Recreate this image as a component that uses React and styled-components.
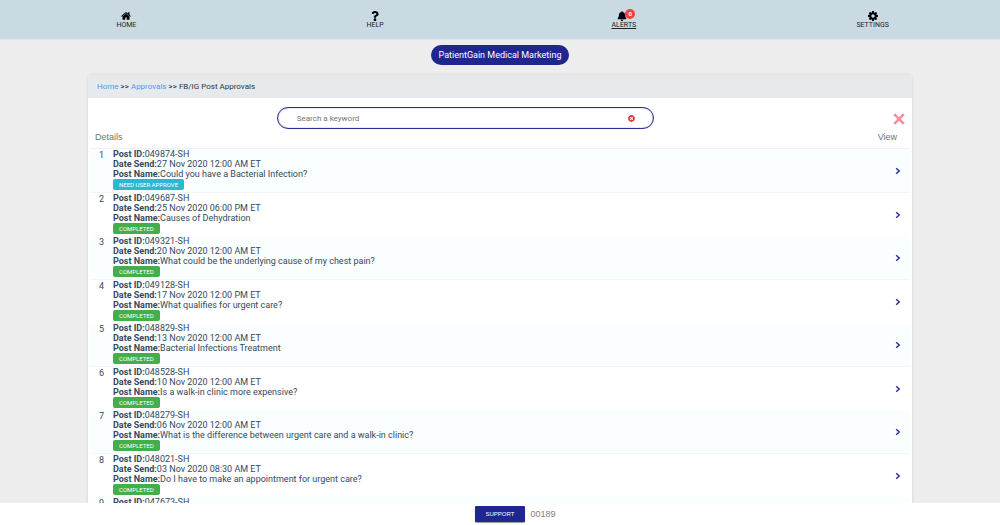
import React, { useState } from "react";
import styled, { createGlobalStyle } from "styled-components";
import { FaQuestion, FaBell, FaTimesCircle } from "react-icons/fa";

const GlobalStyle = createGlobalStyle`
  * {
    box-sizing: border-box;
  }

  body {
    margin: 0;
    background: #ededed;
    font-family: Roboto, "Liberation Sans", Arial, sans-serif;
    color: #34495e;
  }
`;

const Shell = styled.div`
  display: flex;
  flex-direction: column;
  height: 100vh;
`;

const NavBar = styled.nav`
  display: grid;
  grid-template-columns: repeat(4, 1fr);
  flex: none;
  height: 40px;
  padding: 11px 3px 0 2px;
  background: #c9dae2;
  border-bottom: 1px solid #dce6eb;
`;

const NavLink = styled.a`
  position: relative;
  justify-self: center;
  display: flex;
  flex-direction: column;
  align-items: center;
  height: 19px;
  font-size: 7px;
  line-height: 9px;
  color: #222;
  text-decoration: ${(props) => (props.$active ? "underline" : "none")};
`;

const NavIcon = styled.span`
  display: flex;
  height: 10px;
  padding-right: ${(props) => (props.$badged ? "4px" : "0")};
  color: #000;

  svg {
    width: 10px;
    height: 10px;
  }
`;

const Count = styled.span`
  position: absolute;
  top: -2px;
  right: 1px;
  width: 10px;
  height: 10px;
  border-radius: 50%;
  background: #f44336;
  color: #fff;
  font-size: 6px;
  font-weight: bold;
  line-height: 10px;
  text-align: center;
`;

const Main = styled.main`
  flex: 1;
  min-height: 0;
  padding: 5px 88px 0;
  overflow-y: auto;
  scrollbar-width: none;
`;

const ClientButton = styled.button`
  display: block;
  height: 20px;
  margin: 0 auto 10px;
  padding: 0 8px;
  border: none;
  border-radius: 10px;
  background: #1f268f;
  color: #fff;
  font-family: inherit;
  font-size: 9px;
`;

const Panel = styled.section`
  background: #fff;
  border-radius: 3px;
  box-shadow: 0 0 3px rgba(0, 0, 0, 0.12);
`;

const Breadcrumb = styled.div`
  display: flex;
  align-items: center;
  gap: 2px;
  height: 23px;
  padding: 0 9px;
  border-radius: 3px 3px 0 0;
  background: #e6eaed;
  color: #333;
  font-size: 8px;

  a {
    color: #4a9bea;
    text-decoration: none;
  }

  span {
    color: #111;
  }
`;

const SearchRow = styled.form`
  display: grid;
  grid-template-columns: 1fr 2fr 1fr 69px;
  align-items: center;
  padding-top: 9px;
`;

const SearchBox = styled.div`
  grid-column: 2;
  display: flex;
  align-items: center;
  height: 22px;
  padding: 0 18px;
  border: 1px solid #2b3192;
  border-radius: 11px;
  box-shadow: inset 0 0 1px #2b3192;
`;

const SearchInput = styled.input`
  flex: 1;
  min-width: 0;
  padding: 0 1px;
  border: none;
  outline: none;
  background: transparent;
  color: #333;
  font-family: inherit;
  font-size: 8px;

  &::placeholder {
    color: #757575;
  }
`;

const IconButton = styled.button`
  display: flex;
  padding: 0;
  border: none;
  background: none;
  color: ${(props) => props.$color};
`;

const CloseCell = styled.div`
  grid-column: 4;
  justify-self: end;
  padding: 2px 7px 0 0;
`;

const PostTable = styled.table`
  width: calc(100% - 4px);
  margin: 0 2px;
  border-collapse: separate;
  border-spacing: 0;
`;

const HeadCell = styled.th`
  height: 20px;
  padding: 0 13px 3px 5px;
  border-bottom: 1px solid #eef1f2;
  color: #6c7a6c;
  font-family: "Liberation Sans", Arial, sans-serif;
  font-size: 9px;
  font-weight: normal;
  text-align: ${(props) => props.$align || "left"};
`;

const Row = styled.tr`
  td {
    height: 43px;
    padding: 0;
    vertical-align: top;
  }

  &:nth-child(odd) td {
    height: 44px;
    background: #fafeff;
    border-bottom: 1px solid #f2f6f7;
  }
`;

const NumberCell = styled.td`
  width: 23px;
  font-size: 9px;
  line-height: 12px;
  text-align: center;
`;

const Line = styled.div`
  font-size: 9px;
  line-height: 10px;
`;

const Status = styled.span`
  display: block;
  width: fit-content;
  height: 11px;
  padding: 0 6px;
  border-radius: 2px;
  background: ${(props) => (props.$pending ? "#29b9d3" : "#44ad4c")};
  color: #fff;
  font-size: 6px;
  line-height: 11px;
`;

const ViewCell = styled.td`
  && {
    vertical-align: middle;
  }

  button {
    margin: 0 9px 0 auto;
  }
`;

const Footer = styled.footer`
  display: flex;
  flex: none;
  align-items: center;
  justify-content: center;
  gap: 5px;
  height: 22px;
  padding-left: 30px;
  background: #fff;
  color: #808080;
  font-family: "Liberation Sans", Arial, sans-serif;
  font-size: 9px;
`;

const SupportButton = styled.button`
  height: 16px;
  padding: 0 11px;
  border: none;
  border-radius: 1px;
  background: #1f268f;
  box-shadow: 0 1px 1px rgba(0, 0, 0, 0.4);
  color: #fff;
  font-family: inherit;
  font-size: 6px;
`;

const HomeIcon = () => (
  <svg viewBox="64 192 1664 1408" fill="currentColor">
    <path d="M1472 992v480q0 26-19 45t-45 19h-384v-384h-256v384h-384q-26 0-45-19t-19-45v-480q0-1 .5-3t.5-3l575-474 575 474q1 2 1 6zm223-69l-62 74q-8 9-21 11h-3q-13 0-21-7l-692-577-692 577q-12 8-24 7-13-2-21-11l-62-74q-8-10-7-23.5t11-21.5l719-599q32-26 76-26t76 26l244 204v-195q0-14 9-23t23-9h192q14 0 23 9t9 23v408l219 182q10 8 11 21.5t-7 23.5z" />
  </svg>
);

const GearIcon = () => (
  <svg viewBox="128 128 1536 1536" fill="currentColor">
    <path d="M1152 896q0-106-75-181t-181-75-181 75-75 181 75 181 181 75 181-75 75-181zm512-109v222q0 12-8 23t-20 13l-185 28q-19 54-39 91 35 50 107 138 10 12 10 25t-9 23q-27 37-99 108t-94 71q-12 0-26-9l-138-108q-44 23-91 38-16 136-29 186-7 28-36 28h-222q-14 0-24.5-8.5t-11.5-21.5l-28-184q-49-16-90-37l-141 107q-10 9-25 9-14 0-25-11-126-114-165-168-7-10-7-23 0-12 8-23 15-21 51-66.5t54-70.5q-27-50-41-99l-183-27q-13-2-21-12.5t-8-23.5v-222q0-12 8-23t19-13l186-28q14-46 39-92-40-57-107-138-10-12-10-24 0-10 9-23 26-36 98.5-107.5t94.5-71.5q13 0 26 10l138 107q44-23 91-38 16-136 29-186 7-28 36-28h222q14 0 24.5 8.5t11.5 21.5l28 184q49 16 90 37l142-107q9-9 24-9 13 0 25 10 129 119 165 170 7 8 7 22 0 12-8 23-15 21-51 66.5t-54 70.5q26 50 41 98l183 28q13 2 21 12.5t8 23.5z" />
  </svg>
);

const posts = [
  { id: "049874-SH", date: "27 Nov 2020 12:00 AM ET", name: "Could you have a Bacterial Infection?", pending: true },
  { id: "049687-SH", date: "25 Nov 2020 06:00 PM ET", name: "Causes of Dehydration" },
  { id: "049321-SH", date: "20 Nov 2020 12:00 AM ET", name: "What could be the underlying cause of my chest pain?" },
  { id: "049128-SH", date: "17 Nov 2020 12:00 PM ET", name: "What qualifies for urgent care?" },
  { id: "048829-SH", date: "13 Nov 2020 12:00 AM ET", name: "Bacterial Infections Treatment" },
  { id: "048528-SH", date: "10 Nov 2020 12:00 AM ET", name: "Is a walk-in clinic more expensive?" },
  { id: "048279-SH", date: "06 Nov 2020 12:00 AM ET", name: "What is the difference between urgent care and a walk-in clinic?" },
  { id: "048021-SH", date: "03 Nov 2020 08:30 AM ET", name: "Do I have to make an appointment for urgent care?" },
  { id: "047673-SH" },
];

const PostRow = ({ post, number }) => (
  <Row>
    <NumberCell>{number}</NumberCell>
    <td>
      <Line>
        <b>Post ID:</b>
        {post.id}
      </Line>
      {post.name && (
        <>
          <Line>
            <b>Date Send:</b>
            {post.date}
          </Line>
          <Line>
            <b>Post Name:</b>
            {post.name}
          </Line>
          <Status $pending={post.pending}>{post.pending ? "NEED USER APPROVE" : "COMPLETED"}</Status>
        </>
      )}
    </td>
    <ViewCell>
      <IconButton type="button" $color="#2b3192" aria-label={`View post ${post.id}`}>
        <svg width="6" height="8" viewBox="0 0 6 8" fill="none" stroke="currentColor" strokeWidth="1.5">
          <path d="M1.2 1.2 4.2 4 1.2 6.8" />
        </svg>
      </IconButton>
    </ViewCell>
  </Row>
);

const App = () => {
  const [keyword, setKeyword] = useState("");

  return (
    <Shell>
      <GlobalStyle />
      <NavBar>
        <NavLink href="#home">
          <NavIcon>
            <HomeIcon />
          </NavIcon>
          HOME
        </NavLink>
        <NavLink href="#help">
          <NavIcon>
            <FaQuestion />
          </NavIcon>
          HELP
        </NavLink>
        <NavLink href="#alerts" $active>
          <NavIcon $badged>
            <FaBell />
          </NavIcon>
          ALERTS
          <Count>0</Count>
        </NavLink>
        <NavLink href="#settings">
          <NavIcon>
            <GearIcon />
          </NavIcon>
          SETTINGS
        </NavLink>
      </NavBar>

      <Main>
        <ClientButton type="button">PatientGain Medical Marketing</ClientButton>
        <Panel>
          <Breadcrumb>
            <a href="#home">Home</a>
            <span>&gt;&gt;</span>
            <a href="#approvals">Approvals</a>
            <span>&gt;&gt;</span>
            FB/IG Post Approvals
          </Breadcrumb>

          <SearchRow onSubmit={(e) => e.preventDefault()}>
            <SearchBox>
              <SearchInput
                aria-label="Search a keyword"
                placeholder="Search a keyword"
                value={keyword}
                onChange={(e) => setKeyword(e.target.value)}
              />
              <IconButton type="button" $color="#e8323c" aria-label="Clear search" onClick={() => setKeyword("")}>
                <FaTimesCircle size={7} />
              </IconButton>
            </SearchBox>
            <CloseCell>
              <IconButton type="button" $color="#f29199" aria-label="Close">
                <svg width="12" height="12" viewBox="0 0 12 12" stroke="currentColor" strokeWidth="2.6">
                  <path d="M1.2 1.2 10.8 10.8M10.8 1.2 1.2 10.8" />
                </svg>
              </IconButton>
            </CloseCell>
          </SearchRow>

          <PostTable>
            <thead>
              <tr>
                <HeadCell colSpan={2}>Details</HeadCell>
                <HeadCell $align="right">View</HeadCell>
              </tr>
            </thead>
            <tbody>
              {posts.map((post, i) => (
                <PostRow key={post.id} post={post} number={i + 1} />
              ))}
            </tbody>
          </PostTable>
        </Panel>
      </Main>

      <Footer>
        <SupportButton type="button">SUPPORT</SupportButton>
        00189
      </Footer>
    </Shell>
  );
};

export default App;
